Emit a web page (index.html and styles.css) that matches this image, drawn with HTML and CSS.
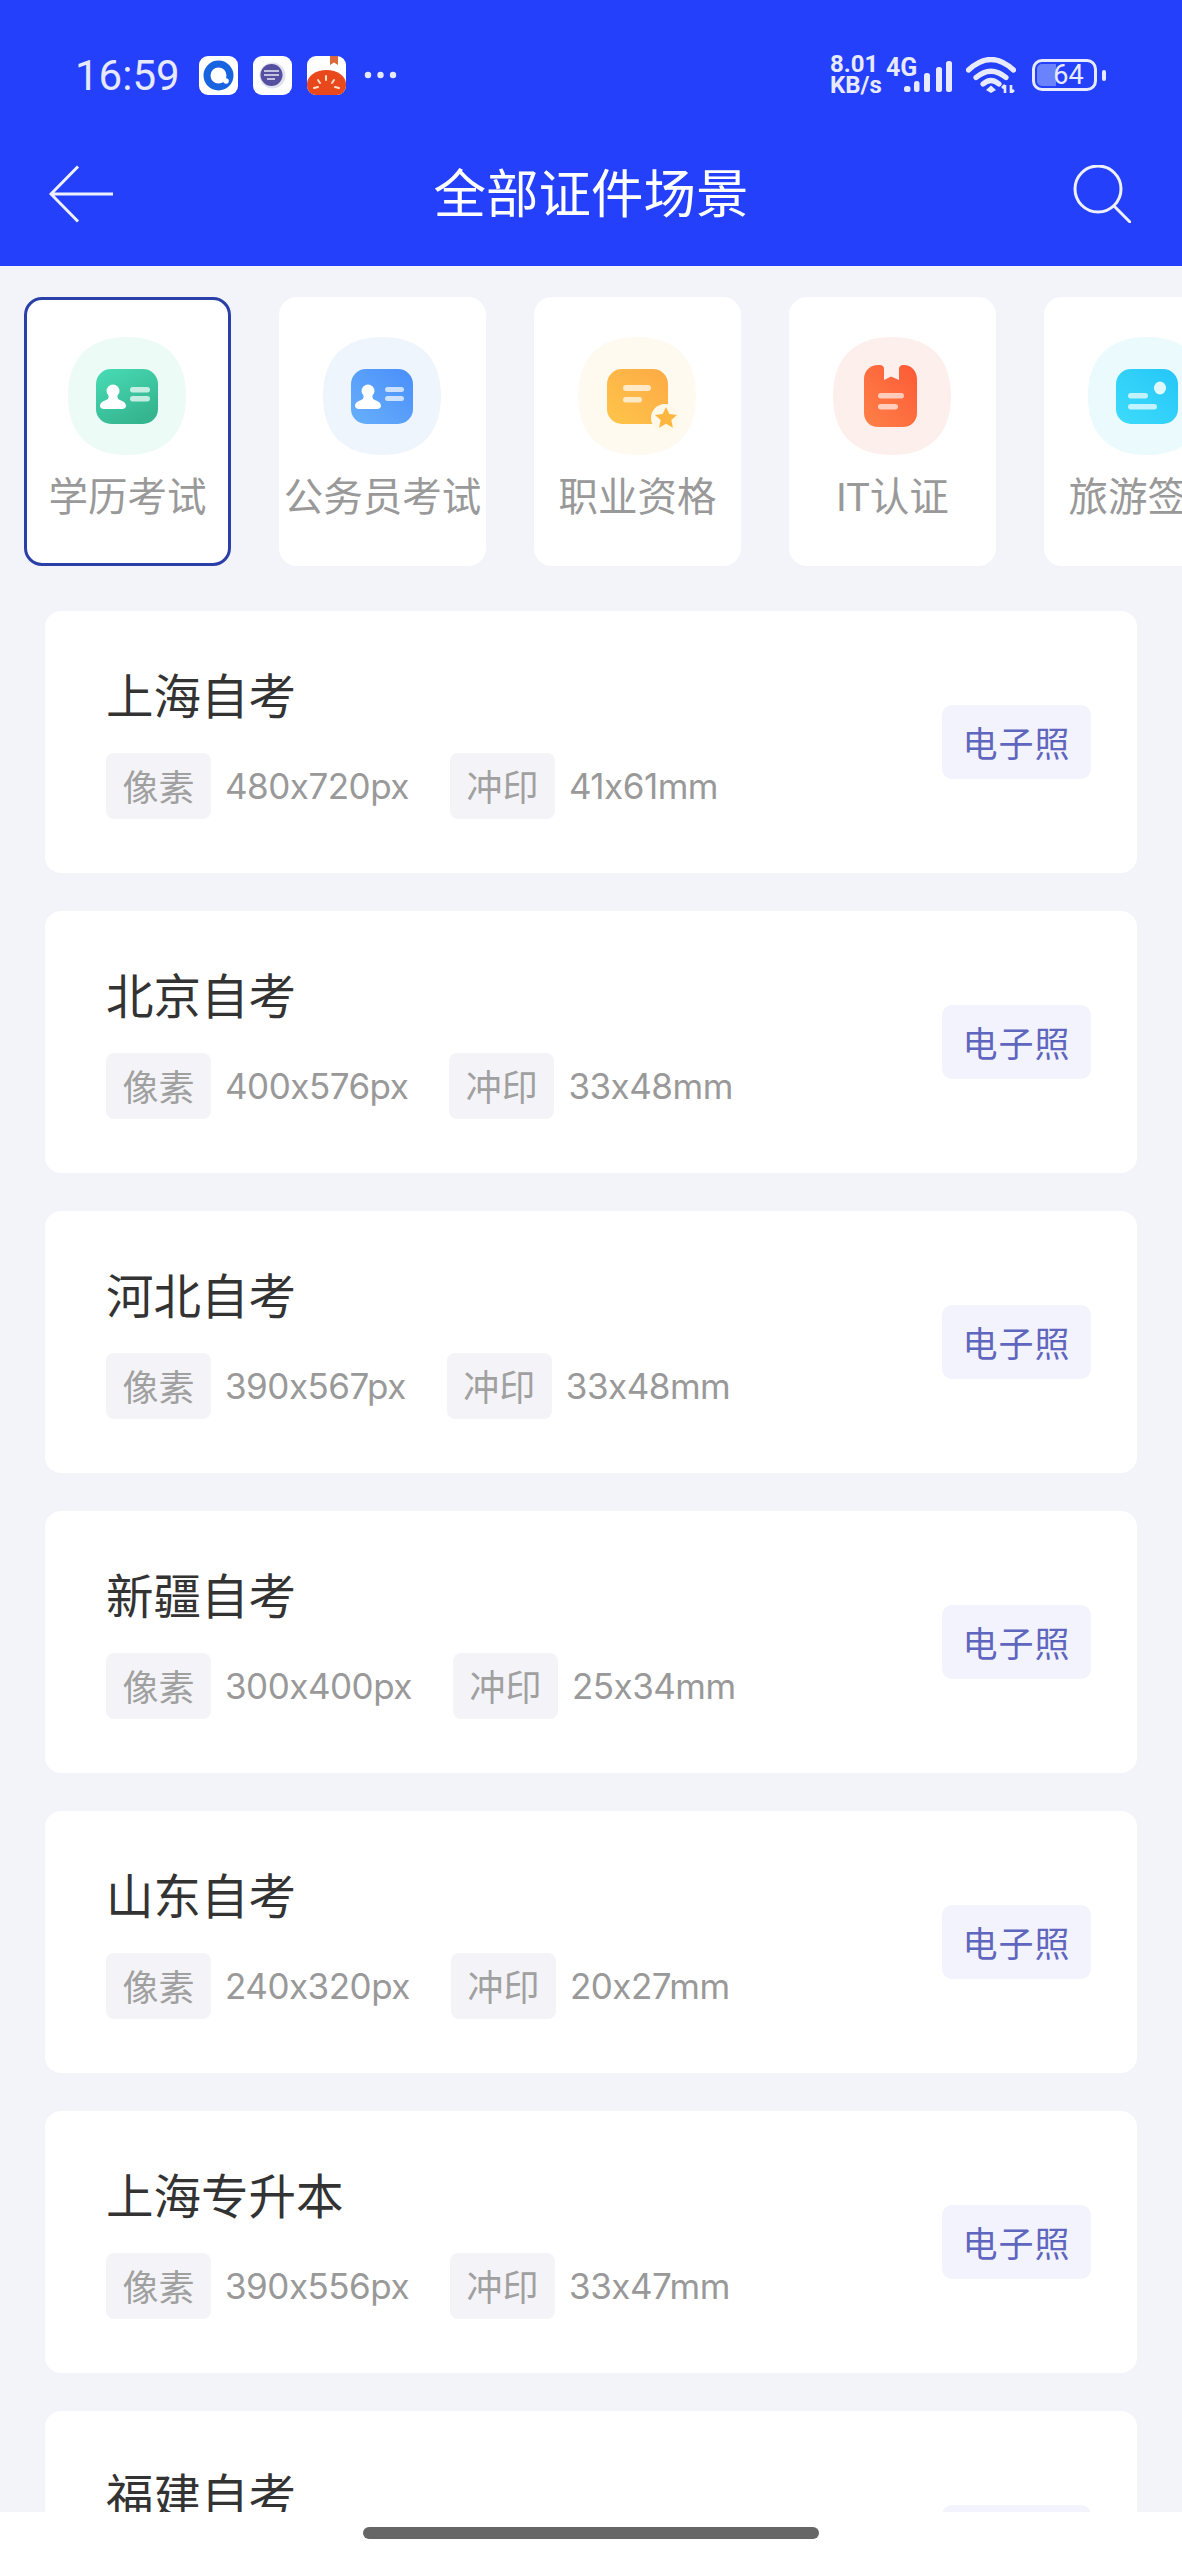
FILE: index.html
```html
<!DOCTYPE html>
<html lang="zh-CN">
<head>
  <meta charset="UTF-8" />
  <meta name="viewport" content="width=device-width, initial-scale=1.0"/>
  <title>全部证件场景</title>
  <link rel="stylesheet" href="styles.css">
</head>
<body>

<div class="screen">
  <div class="header">
    <div class="status-bar">
      <div class="status-left">
        <span class="time">16:59</span>
        <svg class="app-icon" viewBox="0 0 39 39">
          <rect width="39" height="39" rx="9" fill="#fff"/>
          <circle cx="19.5" cy="19.5" r="11.500" fill="none" stroke="#1763e0" stroke-width="7"/>
          <circle cx="27" cy="25" r="2.800" fill="#fff"/>
        </svg>
        <svg class="app-icon" viewBox="0 0 39 39">
          <rect width="39" height="39" rx="9" fill="#fff"/>
          <circle cx="19.5" cy="19.5" r="13" fill="#dfe0f0"/>
          <circle cx="18.5" cy="19" r="11" fill="#544f9e"/>
          <path d="M11 15h15M11 19h15M14 23h8" stroke="#e8e8f6" stroke-width="1.4" fill="none"/>
        </svg>
        <svg class="app-icon" viewBox="0 0 39 39">
          <rect width="39" height="39" rx="9" fill="#fff"/>
          <path d="M0 28C0 20 9 14 19.5 14S39 20 39 28v2a9 9 0 0 1-9 9H9a9 9 0 0 1-9-9z" fill="#e8481c"/>
          <path d="M23 0h8v9l-4-2.500-4 2.500z" fill="#d9683c"/>
          <path d="M19 20v4M11 24l2 3M27 24l-2 3M7 32l4-1M32 32l-4-1" stroke="#ffe2c8" stroke-width="2" stroke-linecap="round" fill="none"/>
        </svg>
        <svg class="more-dots" viewBox="0 0 33 8">
          <circle cx="4" cy="4" r="3.200"/>
          <circle cx="16.500" cy="4" r="3.200"/>
          <circle cx="29" cy="4" r="3.200"/>
        </svg>
      </div>
      <div class="status-right">
        <div class="net-speed">8.01<br>KB/s</div>
        <div class="signal">
          <span class="net-type">4G</span>
          <svg viewBox="0 0 49 31" width="49" height="31">
            <rect x="0" y="25" width="6.500" height="6" rx="2.500"/>
            <rect x="10" y="20" width="5.500" height="11" rx="2.500"/>
            <rect x="20" y="12" width="6" height="19" rx="2.500"/>
            <rect x="32" y="6" width="6" height="25" rx="2.500"/>
            <rect x="42" y="0" width="6" height="31" rx="2.500"/>
          </svg>
        </div>
        <svg class="wifi" viewBox="0 0 50 36" width="50" height="36">
          <path d="M2.500 13Q25 -8 47.500 13M10 20.500Q25 8 40 20.500M17 27Q25 20 33 27" fill="none" stroke="#e8ebff" stroke-width="5.200" stroke-linecap="round"/>
          <path d="M25 28.500l5 4.500-5 3-5-3z" fill="#e8ebff"/>
          <path d="M39 28v8M36 31l3-3M45 28v8M45 36l3-3" fill="none" stroke="#e8ebff" stroke-width="2.600"/>
        </svg>
        <div class="battery"><span>64</span></div>
        <div class="battery-nub"></div>
      </div>
    </div>

    <div class="nav-bar">
      <svg class="nav-back" viewBox="0 0 64 58" width="64" height="58">
        <path d="M29 1.500L2 29l27 27.500M2 29h62" fill="none" stroke="#eef0ff" stroke-width="3"/>
      </svg>
      <h1>全部证件场景</h1>
      <svg class="nav-search" viewBox="0 0 58 58" width="58" height="58">
        <circle cx="25" cy="24" r="23" fill="none" stroke="#eef0ff" stroke-width="3"/>
        <path d="M41 41l16 16" fill="none" stroke="#eef0ff" stroke-width="3" stroke-linecap="round"/>
      </svg>
    </div>
  </div>

  <div class="tabs">
    <div class="tab active">
      <svg class="tab-icon" viewBox="0 0 118 118">
        <defs>
          <linearGradient id="g-green" x1="0" y1="0" x2="0.600" y2="1"><stop offset="0" stop-color="#48dcb6"/><stop offset="1" stop-color="#35b58f"/></linearGradient>
          <linearGradient id="g-blue" x1="1" y1="0" x2="0" y2="1"><stop offset="0" stop-color="#4a8efa"/><stop offset="1" stop-color="#67b0fb"/></linearGradient>
          <linearGradient id="g-yellow" x1="1" y1="0" x2="0" y2="1"><stop offset="0" stop-color="#fdaa45"/><stop offset="1" stop-color="#fec54a"/></linearGradient>
          <linearGradient id="g-red" x1="1" y1="0" x2="0" y2="1"><stop offset="0" stop-color="#fd5a35"/><stop offset="1" stop-color="#fe8148"/></linearGradient>
          <linearGradient id="g-cyan" x1="1" y1="0" x2="0" y2="1"><stop offset="0" stop-color="#25c6f7"/><stop offset="1" stop-color="#3ddcfb"/></linearGradient>
        </defs>
        <path d="M59 0C97 0 118 21 118 59S97 118 59 118 0 97 0 59 21 0 59 0Z" fill="#edfbf7"/>
        <rect x="28" y="32" width="62" height="55" rx="15" fill="url(#g-green)"/>
        <circle cx="45" cy="54" r="6.500" fill="#fff"/>
        <path d="M41 58h8l1 4c4 2 8 3 8 7 0 2-2 3-4 3H36c-2 0-4-1-4-3 0-4 4-5 8-7z" fill="#fff"/>
        <rect x="62" y="50" width="20" height="5.500" rx="2.700" fill="#fff" opacity=".7"/>
        <rect x="62" y="59" width="20" height="5.500" rx="2.700" fill="#fff" opacity=".7"/>
      </svg>
      <div class="tab-label">学历考试</div>
    </div>

    <div class="tab">
      <svg class="tab-icon" viewBox="0 0 118 118">
        <path d="M59 0C97 0 118 21 118 59S97 118 59 118 0 97 0 59 21 0 59 0Z" fill="#eff5fd"/>
        <rect x="28" y="32" width="62" height="55" rx="15" fill="url(#g-blue)"/>
        <circle cx="45" cy="54" r="6.500" fill="#fff"/>
        <path d="M41 58h8l1 4c4 2 8 3 8 7 0 2-2 3-4 3H36c-2 0-4-1-4-3 0-4 4-5 8-7z" fill="#fff"/>
        <rect x="62" y="50" width="19" height="5" rx="2.500" fill="#fff" opacity=".7"/>
        <rect x="62" y="59" width="19" height="5" rx="2.500" fill="#fff" opacity=".7"/>
      </svg>
      <div class="tab-label">公务员考试</div>
    </div>

    <div class="tab">
      <svg class="tab-icon" viewBox="0 0 118 118">
        <path d="M59 0C97 0 118 21 118 59S97 118 59 118 0 97 0 59 21 0 59 0Z" fill="#fefaef"/>
        <rect x="29" y="32" width="61" height="55" rx="15" fill="url(#g-yellow)"/>
        <rect x="45" y="48" width="28" height="6" rx="3" fill="#fff" opacity=".7"/>
        <rect x="45" y="60" width="19" height="5.500" rx="2.700" fill="#fff" opacity=".7"/>
        <circle cx="87" cy="81" r="14" fill="#fef8e8"/>
        <path d="M88 70l3.300 7 7.700.9-5.700 5.200 1.600 7.600-6.900-3.900-6.900 3.900 1.600-7.600L77 77.900l7.700-.9z" fill="#fdb740"/>
      </svg>
      <div class="tab-label">职业资格</div>
    </div>

    <div class="tab">
      <svg class="tab-icon" viewBox="0 0 118 118">
        <path d="M59 0C97 0 118 21 118 59S97 118 59 118 0 97 0 59 21 0 59 0Z" fill="#fdf0ec"/>
        <path d="M31 42c0-8 6-14 14-14h2c2 0 4 1 4 4v11l7-3.500 8 3.500V32c0-3 2-4 4-4h1c7 0 13 6 13 14v34c0 8-6 14-14 14H45c-8 0-14-6-14-14z" fill="url(#g-red)"/>
        <rect x="45" y="56" width="26" height="5.500" rx="2.700" fill="#fff" opacity=".65"/>
        <rect x="45" y="67" width="20" height="5.500" rx="2.700" fill="#fff" opacity=".65"/>
      </svg>
      <div class="tab-label">IT认证</div>
    </div>

    <div class="tab">
      <svg class="tab-icon" viewBox="0 0 118 118">
        <path d="M59 0C97 0 118 21 118 59S97 118 59 118 0 97 0 59 21 0 59 0Z" fill="#ebfafd"/>
        <rect x="28" y="32" width="62" height="55" rx="15" fill="url(#g-cyan)"/>
        <ellipse cx="72" cy="51" rx="6" ry="6.500" fill="#fff" opacity=".85"/>
        <rect x="40" y="56" width="20" height="5.500" rx="2.700" fill="#fff" opacity=".7"/>
        <rect x="40" y="67" width="29" height="5.500" rx="2.700" fill="#fff" opacity=".7"/>
      </svg>
      <div class="tab-label">旅游签证</div>
    </div>
  </div>

  <div class="list">
    <div class="card">
      <div class="card-info">
        <div class="card-title">上海自考</div>
        <div class="specs">
          <span class="chip">像素</span><span class="value">480x720px</span>
          <span class="chip">冲印</span><span class="value">41x61mm</span>
        </div>
      </div>
      <div class="photo-btn">电子照</div>
    </div>

    <div class="card">
      <div class="card-info">
        <div class="card-title">北京自考</div>
        <div class="specs">
          <span class="chip">像素</span><span class="value">400x576px</span>
          <span class="chip">冲印</span><span class="value">33x48mm</span>
        </div>
      </div>
      <div class="photo-btn">电子照</div>
    </div>

    <div class="card">
      <div class="card-info">
        <div class="card-title">河北自考</div>
        <div class="specs">
          <span class="chip">像素</span><span class="value">390x567px</span>
          <span class="chip">冲印</span><span class="value">33x48mm</span>
        </div>
      </div>
      <div class="photo-btn">电子照</div>
    </div>

    <div class="card">
      <div class="card-info">
        <div class="card-title">新疆自考</div>
        <div class="specs">
          <span class="chip">像素</span><span class="value">300x400px</span>
          <span class="chip">冲印</span><span class="value">25x34mm</span>
        </div>
      </div>
      <div class="photo-btn">电子照</div>
    </div>

    <div class="card">
      <div class="card-info">
        <div class="card-title">山东自考</div>
        <div class="specs">
          <span class="chip">像素</span><span class="value">240x320px</span>
          <span class="chip">冲印</span><span class="value">20x27mm</span>
        </div>
      </div>
      <div class="photo-btn">电子照</div>
    </div>

    <div class="card">
      <div class="card-info">
        <div class="card-title">上海专升本</div>
        <div class="specs">
          <span class="chip">像素</span><span class="value">390x556px</span>
          <span class="chip">冲印</span><span class="value">33x47mm</span>
        </div>
      </div>
      <div class="photo-btn">电子照</div>
    </div>

    <div class="card">
      <div class="card-info">
        <div class="card-title">福建自考</div>
      </div>
      <div class="photo-btn">电子照</div>
    </div>
  </div>

  <div class="home-bar">
    <div class="home-handle"></div>
  </div>
</div>

</body>
</html>
```

FILE: styles.css
```css
body {
  margin: 0;
  font-family: Roboto, "Noto Sans CJK SC", sans-serif;
  background-color: #f3f4f9;
}

.screen {
  width: 1182px;
  height: 2560px;
  display: flex;
  flex-direction: column;
  overflow: hidden;
}

/* header */
.header {
  background-color: #2440fb;
  height: 266px;
  flex-shrink: 0;
  box-sizing: border-box;
  padding-top: 50px;
}

.status-bar {
  height: 50px;
  display: flex;
  justify-content: space-between;
  align-items: center;
  padding: 0 76px 0 75px;
}

.status-left, .status-right {
  display: flex;
  align-items: center;
}

.time {
  color: #e6e9ff;
  font-size: 42px;
  width: 124px;
}

.app-icon {
  width: 39px;
  height: 39px;
  margin-right: 15px;
}

.more-dots {
  width: 33px;
  height: 8px;
  margin-left: 3px;
  fill: #e6e9ff;
}

.status-right {
  color: #e8ebff;
}

.net-speed {
  font-size: 24px;
  font-weight: 700;
  line-height: 21px;
  width: 56px;
  margin-right: 18px;
}

.signal {
  position: relative;
  height: 31px;
  margin-top: 2px;
  margin-right: 13px;
  fill: #e8ebff;
}

.signal svg {
  display: block;
}

.net-type {
  position: absolute;
  left: -18px;
  top: -5px;
  font-size: 25px;
  font-weight: 700;
  line-height: 24px;
}

.wifi {
  margin-right: 16px;
}

.battery {
  width: 65px;
  height: 32px;
  box-sizing: border-box;
  border: 3px solid #e8ebff;
  border-radius: 10px;
  padding: 2px;
  background: linear-gradient(90deg, #6a82fb 0 19px, transparent 19px) content-box;
  display: flex;
  align-items: center;
  justify-content: center;
  font-size: 27px;
  line-height: 1;
}

.battery span {
  padding-left: 8px;
}

.battery-nub {
  width: 4px;
  height: 11px;
  margin-left: 5px;
  border-radius: 2px;
  background-color: #e8ebff;
}

.nav-bar {
  display: flex;
  align-items: center;
  margin-top: 65px;
  padding: 0 51px 0 49px;
}

.nav-bar h1 {
  flex: 1;
  margin: 0;
  padding: 2px 4px 0 0;
  text-align: center;
  color: #fff;
  font-size: 52.5px;
  font-weight: 400;
  line-height: 56px;
}

/* category tabs */
.tabs {
  display: flex;
  gap: 48px;
  flex-shrink: 0;
  padding: 31px 0 45px 24px;
  overflow: hidden;
}

.tab {
  width: 207px;
  height: 269px;
  flex-shrink: 0;
  box-sizing: border-box;
  padding-top: 37px;
  background-color: #fff;
  border: 3px solid #fff;
  border-radius: 18px;
  display: flex;
  flex-direction: column;
  align-items: center;
}

.tab.active {
  border-color: #2b3fa8;
}

.tab-icon {
  width: 118px;
  height: 118px;
  flex-shrink: 0;
  margin-right: 2px;
}

.tab-label {
  margin-top: 18px;
  color: #999;
  font-size: 39.5px;
  line-height: 50px;
  white-space: nowrap;
}

/* scene list */
.list {
  flex: 1;
  min-height: 0;
  overflow: hidden;
  display: flex;
  flex-direction: column;
  gap: 38px;
  padding: 0 45px;
}

.card {
  height: 262px;
  flex-shrink: 0;
  box-sizing: border-box;
  padding: 0 46px 0 63px;
  background-color: #fff;
  border-radius: 16px;
  display: flex;
  justify-content: space-between;
  align-items: center;
}

.card-info {
  align-self: flex-start;
  padding-top: 55px;
}

.card-title {
  color: #333;
  font-size: 47.5px;
  line-height: 64px;
  margin: 0 0 23px -2px;
}

.specs {
  display: flex;
  align-items: center;
  margin-left: -2px;
}

.chip {
  width: 105px;
  height: 64px;
  padding-bottom: 2px;
  background-color: #f4f4f8;
  border-radius: 8px;
  display: flex;
  align-items: center;
  justify-content: center;
  color: #a0a0a0;
  font-size: 36px;
}

.value {
  margin: 0 41px 0 14px;
  color: #999;
  font-family: Inter, Roboto, sans-serif;
  font-size: 35px;
  letter-spacing: -0.5px;
}

.photo-btn {
  width: 149px;
  height: 72px;
  padding-bottom: 2px;
  background-color: #f3f3fd;
  border-radius: 10px;
  display: flex;
  align-items: center;
  justify-content: center;
  color: #5f66bd;
  font-size: 35px;
  letter-spacing: 1px;
}

.home-bar {
  height: 48px;
  flex-shrink: 0;
  background-color: #fff;
  display: flex;
  justify-content: center;
  padding-top: 15px;
  box-sizing: border-box;
}

.home-handle {
  width: 456px;
  height: 12px;
  border-radius: 6px;
  background-color: #666;
}
```
